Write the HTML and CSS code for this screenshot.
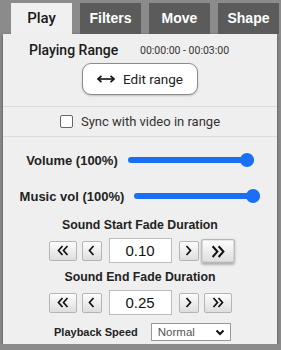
FILE: index.html
```html
<!DOCTYPE html>
<html>
<head lang="en">
    <meta charset="UTF-8">
    <title>Sound panel</title>
    <link rel="stylesheet" href="styles.css">
</head>
<body>
    <ul class="tabs">
        <li class="tab active">Play</li>
        <li class="tab">Filters</li>
        <li class="tab">Move</li>
        <li class="tab">Shape</li>
    </ul>
    <div class="panel">
        <div class="range-box">
            <div class="range-head">
                <span class="range-label">Playing Range</span>
                <span class="range-time">00:00:00 - 00:03:00</span>
            </div>
            <button class="edit-btn">
                <svg width="18" height="8" viewBox="0 0 18 8">
                    <path d="M1 4H17" stroke="#111" stroke-width="1.6"/>
                    <path d="M4.5 0.8L1 4L4.5 7.2M13.5 0.8L17 4L13.5 7.2" fill="none" stroke="#111" stroke-width="1.6"/>
                </svg>
                Edit range
            </button>
        </div>
        <div class="sync-row">
            <span class="check"></span>
            <span>Sync with video in range</span>
        </div>
        <div class="vol-row first">
            <span class="vol-label">Volume (100%)</span>
            <div class="slider"><div class="thumb"></div></div>
        </div>
        <div class="vol-row">
            <span class="vol-label">Music vol (100%)</span>
            <div class="slider"><div class="thumb"></div></div>
        </div>

        <div class="fade-label">Sound Start Fade Duration</div>
        <div class="step-row">
            <span class="btn wide"><svg width="12" height="11" viewBox="0 0 12 11"><path d="M5.5 1L1.5 5.5L5.5 10M10.5 1L6.5 5.5L10.5 10" fill="none" stroke="#111" stroke-width="1.7"/></svg></span>
            <span class="btn"><svg width="7" height="11" viewBox="0 0 7 11"><path d="M5.5 1L1.5 5.5L5.5 10" fill="none" stroke="#111" stroke-width="1.7"/></svg></span>
            <span class="num">0.10</span>
            <span class="btn"><svg width="7" height="11" viewBox="0 0 7 11"><path d="M1.5 1L5.5 5.5L1.5 10" fill="none" stroke="#111" stroke-width="1.7"/></svg></span>
            <span class="btn wide hover"><svg width="12" height="11" viewBox="0 0 12 11"><path d="M1.5 1L5.5 5.5L1.5 10M6.5 1L10.5 5.5L6.5 10" fill="none" stroke="#111" stroke-width="1.7"/></svg></span>
        </div>
        <div class="fade-label second">Sound End Fade Duration</div>
        <div class="step-row">
            <span class="btn wide"><svg width="12" height="11" viewBox="0 0 12 11"><path d="M5.5 1L1.5 5.5L5.5 10M10.5 1L6.5 5.5L10.5 10" fill="none" stroke="#111" stroke-width="1.7"/></svg></span>
            <span class="btn"><svg width="7" height="11" viewBox="0 0 7 11"><path d="M5.5 1L1.5 5.5L5.5 10" fill="none" stroke="#111" stroke-width="1.7"/></svg></span>
            <span class="num">0.25</span>
            <span class="btn"><svg width="7" height="11" viewBox="0 0 7 11"><path d="M1.5 1L5.5 5.5L1.5 10" fill="none" stroke="#111" stroke-width="1.7"/></svg></span>
            <span class="btn wide"><svg width="12" height="11" viewBox="0 0 12 11"><path d="M1.5 1L5.5 5.5L1.5 10M6.5 1L10.5 5.5L6.5 10" fill="none" stroke="#111" stroke-width="1.7"/></svg></span>
        </div>

        <div class="speed-row">
            <span class="speed-label">Playback Speed</span>
            <div class="select">
                <span>Normal</span>
                <svg width="10" height="7" viewBox="0 0 10 7"><path d="M1.5 1.5L5 5L8.5 1.5" fill="none" stroke="#111" stroke-width="2"/></svg>
            </div>
        </div>
    </div>
</body>
</html>
```

FILE: styles.css
```css
*{
    margin: 0;
    padding: 0;
    box-sizing: border-box;
}
body{
    background: #8b8b8b;
    font-family: "Liberation Sans", Arial, sans-serif;
    color: #222;
}
li{
    list-style: none;
}
.tabs{
    display: flex;
    gap: 8px;
    padding: 3px 0 0 11px;
}
.tab{
    width: 61px;
    height: 31px;
    line-height: 31px;
    text-align: center;
    background: #5b5b5b;
    color: #fff;
    font-weight: bold;
    font-size: 14px;
}
.tab.active{
    background: #f0f0f0;
    color: #1a1a1a;
    font-family: "Roboto", sans-serif;
    font-weight: 500;
    font-size: 15px;
}
.panel{
    width: 274px;
    height: 310px;
    margin-left: 3px;
    background: #efefef;
    box-shadow: 0 1px 3px rgba(0,0,0,.45);
}
.range-box{
    height: 73px;
    border-bottom: 1px solid #dadada;
    font-family: "Roboto", sans-serif;
}
.range-head{
    display: flex;
    align-items: center;
    padding: 8px 0 0 26px;
    height: 24px;
}
.range-label{
    width: 111px;
    font-size: 14px;
    font-weight: 500;
    color: #1a1a1a;
}
.range-time{
    font-size: 10.5px;
    color: #333;
}
.edit-btn{
    display: flex;
    align-items: center;
    justify-content: center;
    gap: 8px;
    width: 116px;
    height: 32px;
    margin: 5px auto 0;
    background: #fff;
    border: 1px solid #8c8c8c;
    border-radius: 9px;
    box-shadow: 0 1px 2px rgba(0,0,0,.2);
    font-family: "Roboto", sans-serif;
    font-size: 13.5px;
    color: #222;
}
.sync-row{
    display: flex;
    align-items: center;
    justify-content: center;
    gap: 8px;
    height: 30px;
    border-bottom: 1px solid #dadada;
    font-family: "Roboto", sans-serif;
    font-size: 13px;
    color: #333;
}
.check{
    width: 13px;
    height: 13px;
    border: 1px solid #666;
    border-radius: 2px;
    background: #fff;
}
.vol-row{
    display: flex;
    align-items: center;
    justify-content: center;
    gap: 10px;
    height: 36px;
    font-weight: bold;
    font-size: 13px;
    color: #222;
}
.vol-row.first{
    margin-top: 5px;
}
.slider{
    position: relative;
    width: 126px;
    height: 6px;
    border-radius: 3px;
    background: #1a6ff4;
}
.thumb{
    position: absolute;
    right: 0;
    top: -4px;
    width: 14px;
    height: 14px;
    border-radius: 50%;
    background: #1a6ff4;
}
.fade-label{
    margin-top: 3px;
    height: 16px;
    line-height: 16px;
    text-align: center;
    font-weight: bold;
    font-size: 12.3px;
    color: #222;
}
.fade-label.second{
    margin-top: 6px;
}
.step-row{
    display: flex;
    align-items: center;
    justify-content: center;
    gap: 5px;
    margin-top: 5px;
    height: 25px;
}
.btn{
    display: flex;
    align-items: center;
    justify-content: center;
    width: 20px;
    height: 20px;
    border: 1px solid #b4b4b4;
    border-radius: 2px;
    background: linear-gradient(#fdfdfd, #dedede);
}
.btn.wide{
    width: 28px;
}
.btn.hover{
    transform: scale(1.2);
    box-shadow: 0 1px 2px rgba(0,0,0,.25);
}
.num{
    width: 63px;
    height: 25px;
    line-height: 23px;
    margin: 0 2px;
    text-align: center;
    background: #fff;
    border: 1px solid #bdbdbd;
    font-size: 15px;
    color: #111;
}
.speed-row{
    display: flex;
    align-items: center;
    gap: 13px;
    margin-top: 8px;
    padding-left: 51px;
    font-size: 11px;
}
.speed-label{
    font-weight: bold;
    color: #222;
}
.select{
    display: flex;
    align-items: center;
    justify-content: space-between;
    width: 80px;
    height: 18px;
    padding: 0 5px 0 6px;
    background: #fff;
    border: 1px solid #999;
    color: #555;
    font-size: 11.5px;
}
```
